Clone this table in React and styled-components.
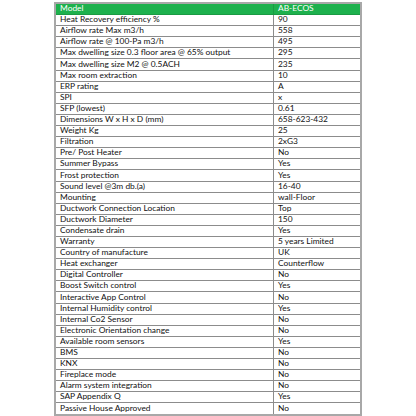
import React from 'react';
import styled, { createGlobalStyle } from 'styled-components';

const GlobalStyle = createGlobalStyle`
  html, body {
    margin: 0;
    padding: 0;
    background: #fff;
  }
  body {
    font-family: Lato, "Open Sans", "Liberation Sans", sans-serif;
  }
`;

const Page = styled.div`
  width: 416px;
  height: 416px;
  display: flex;
  justify-content: center;
  padding-top: 2px;
  box-sizing: border-box;
`;

const Table = styled.table`
  width: 308px;
  border-collapse: collapse;
  border: 2px solid #a8a8a8;
  table-layout: fixed;
`;

const Row = styled.tr`
  background: ${props => (props.head ? '#1db14d' : '#fff')};
`;

const Cell = styled.td`
  border: 1px solid ${props => (props.head ? '#1a9a43' : '#8c8c8c')};
  padding: 0 0 1.6px 4px;
  height: 8.3px;
  font-size: 8.4px;
  line-height: 8.3px;
  vertical-align: middle;
  color: ${props => (props.head ? '#fff' : '#111')};
  white-space: nowrap;
  overflow: hidden;
  width: ${props => props.w || 'auto'};
`;

const rows = [
  ['Heat Recovery efficiency %', '90'],
  ['Airflow rate Max m3/h', '558'],
  ['Airflow rate @ 100-Pa m3/h', '495'],
  ['Max dwelling size 0.3 floor area @ 65% output', '295'],
  ['Max dwelling size M2 @ 0.5ACH', '235'],
  ['Max room extraction', '10'],
  ['ERP rating', 'A'],
  ['SPI', 'x'],
  ['SFP (lowest)', '0.61'],
  ['Dimensions W x H x D (mm)', '658-623-432'],
  ['Weight Kg', '25'],
  ['Filtration', '2xG3'],
  ['Pre/ Post Heater', 'No'],
  ['Summer Bypass', 'Yes'],
  ['Frost protection', 'Yes'],
  ['Sound level @3m db.(a)', '16-40'],
  ['Mounting', 'wall-Floor'],
  ['Ductwork Connection Location', 'Top'],
  ['Ductwork Diameter', '150'],
  ['Condensate drain', 'Yes'],
  ['Warranty', '5 years Limited'],
  ['Country of manufacture', 'UK'],
  ['Heat exchanger', 'Counterflow'],
  ['Digital Controller', 'No'],
  ['Boost Switch control', 'Yes'],
  ['Interactive App Control', 'No'],
  ['Internal Humidity control', 'Yes'],
  ['Internal Co2 Sensor', 'No'],
  ['Electronic Orientation change', 'No'],
  ['Available room sensors', 'Yes'],
  ['BMS', 'No'],
  ['KNX', 'No'],
  ['Fireplace mode', 'No'],
  ['Alarm system integration', 'No'],
  ['SAP Appendix Q', 'Yes'],
  ['Passive House Approved', 'No'],
];

export default function App() {
  return (
    <Page>
      <GlobalStyle />
      <Table>
        <tbody>
          <Row head>
            <Cell head w="213px">Model</Cell>
            <Cell head>AB-ECOS</Cell>
          </Row>
          {rows.map(([label, value]) => (
            <Row key={label}>
              <Cell>{label}</Cell>
              <Cell>{value}</Cell>
            </Row>
          ))}
        </tbody>
      </Table>
    </Page>
  );
}
